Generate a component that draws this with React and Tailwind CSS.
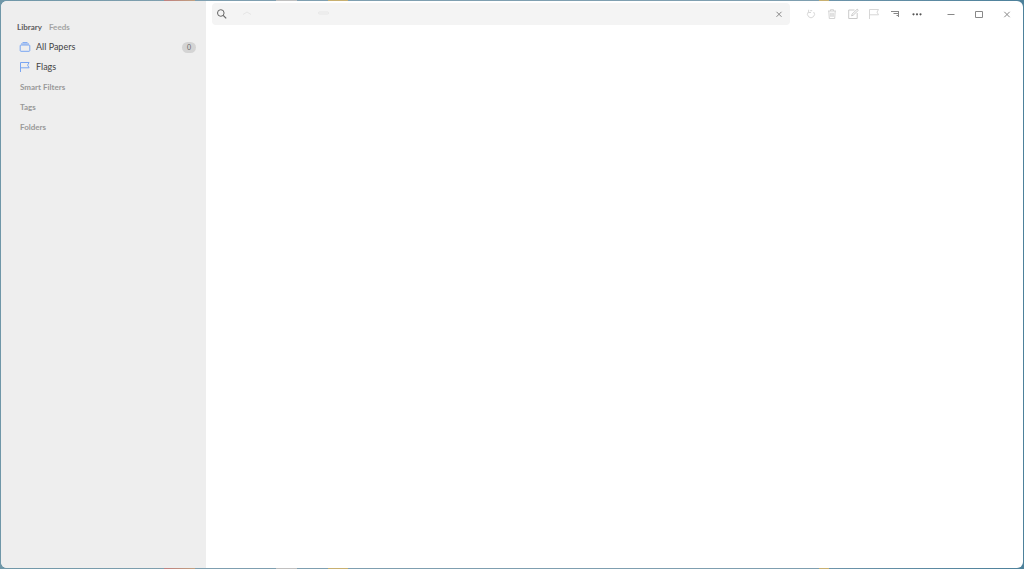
import React, { useState } from 'react';

const CollectionIcon = () => (
  <svg className="h-3 w-3 shrink-0 text-[#78a5f2]" viewBox="0 0 12 12" fill="none" stroke="currentColor">
    <rect x="1.2" y="4" width="9.6" height="6.3" rx="0.8" />
    <path d="M2 2.9h8M3.5 1.5h5" strokeWidth="0.9" />
  </svg>
);

const SideFlagIcon = () => (
  <svg className="h-3 w-3 shrink-0 text-[#78a5f2]" viewBox="0 0 12 12" fill="none" stroke="currentColor">
    <path d="M1.5 11V1.5h8.6L8.6 4.1l1.5 2.7H1.5" />
  </svg>
);

const tools = [
  {
    label: 'Refresh',
    icon: <path d="M3.3 4A3.5 3.5 0 1 0 8.7 4M3.6 1.8v2.7H6M5.2 2.7h2" />,
    color: 'text-[#d3d3d3]',
  },
  {
    label: 'Delete',
    icon: <path d="M2 3h8M4.5 3V1.7h3V3M2.8 3l.5 7.5h5.4L9.2 3M4.8 4.8v4M6 4.8v4M7.2 4.8v4" />,
    color: 'text-[#cfcfcf]',
  },
  {
    label: 'Edit',
    icon: <path d="M7.5 2H1.7v8.5h8.5V5M4.6 7.8l.4-1.6 5.2-5 1.1 1.1-5.2 5z" />,
    color: 'text-[#c4c4c4]',
  },
  {
    label: 'Flag',
    icon: <path d="M1.5 11V1.5h9L9 4.1l1.5 2.7h-9" />,
    color: 'text-[#d3d3d3]',
  },
];

const windowButtons = [
  { label: 'Minimize', icon: <path d="M2.5 6.5h7" /> },
  { label: 'Maximize', icon: <path d="M2.5 3.5h7v6h-7z" /> },
  { label: 'Close', icon: <path d="M3.3 3.8l5.4 5.4M8.7 3.8L3.3 9.2" /> },
];

const sections = ['Smart Filters', 'Tags', 'Folders'];

const App = () => {
  const [tab, setTab] = useState('library');
  const [query, setQuery] = useState('');

  return (
    <div className="flex min-h-screen bg-[linear-gradient(90deg,#6f97a8_0%,#7f9fae_16%,#c08080_16%,#c0a080_19%,#7f9fb0_19%,#7f9fb0_27%,#c0c0c0_27%,#c0c0c0_29%,#7f9fb0_29%,#7f9fb0_32%,#c8b070_32%,#c8b070_34%,#7f9fb0_34%,#7f9fb0_80%,#c8b070_80%,#c8b070_81%,#6d94aa_81%,#4d819b_100%)] p-px font-['Lato',sans-serif]">
      <div className="flex flex-1 overflow-hidden rounded-md bg-white">
        {/* Sidebar */}
        <aside className="w-[205px] shrink-0 bg-[#eeeeee] pt-4">
          <div className="flex h-5 items-center gap-[7px] pl-4 text-[8px] font-bold">
            <button onClick={() => setTab('library')} className={tab === 'library' ? 'text-[#5c5c5c]' : 'text-[#a3a3a3]'}>
              Library
            </button>
            <button onClick={() => setTab('feeds')} className={tab === 'feeds' ? 'text-[#5c5c5c]' : 'text-[#a3a3a3]'}>
              Feeds
            </button>
          </div>
          <nav className="text-[9px] text-[#444444]">
            <a href="#papers" className="flex h-5 items-center pl-[18px] pr-2.5">
              <CollectionIcon />
              <span className="ml-[5px] flex-1">All Papers</span>
              <span className="flex h-[11px] w-3.5 items-center justify-center rounded-full bg-[#d4d4d4] text-[7px] text-[#666666]">0</span>
            </a>
            <a href="#flags" className="flex h-5 items-center pl-[18px] pr-2.5">
              <SideFlagIcon />
              <span className="ml-[5px]">Flags</span>
            </a>
          </nav>
          {sections.map((name) => (
            <h2 key={name} className="flex h-5 items-center pl-[19px] text-[8px] font-bold text-[#999999]">
              {name}
            </h2>
          ))}
        </aside>

        {/* Main */}
        <main className="min-w-0 flex-1">
          <header className="flex items-center pl-1.5 pr-0.5 pt-0.5">
            <div className="flex h-[22px] flex-1 items-center rounded bg-[#f4f4f4] px-1">
              <svg className="h-3 w-3 shrink-0 text-[#666666]" viewBox="0 0 12 12" fill="none" stroke="currentColor">
                <circle cx="4.8" cy="5" r="3.3" />
                <path d="M7.2 7.4l3 3" strokeWidth="1.2" />
              </svg>
              <svg className="ml-3.5 h-2 w-24 shrink-0 text-[#e6e6e6]" viewBox="0 0 96 8" fill="none" stroke="currentColor">
                <path d="M1 4.5l4-2.5 4 2.5" />
                <rect x="76.5" y="2" width="10" height="2" rx="1" />
              </svg>
              <input
                type="text"
                aria-label="Search"
                value={query}
                onChange={(e) => setQuery(e.target.value)}
                className="min-w-0 flex-1 bg-transparent text-[9px] outline-none"
              />
              <button aria-label="Clear search" onClick={() => setQuery('')} className="flex w-3.5 justify-center text-[#888888]">
                <svg className="h-3 w-3" viewBox="0 0 12 12" fill="none" stroke="currentColor">
                  <path d="M3.5 3.8l5 5M8.5 3.8l-5 5" />
                </svg>
              </button>
            </div>

            <div className="ml-2.5 flex items-center">
              {tools.map((tool) => (
                <button key={tool.label} aria-label={tool.label} className={`flex w-[21px] justify-center ${tool.color}`}>
                  <svg className="h-3 w-3" viewBox="0 0 12 12" fill="none" stroke="currentColor" strokeWidth="0.9">
                    {tool.icon}
                  </svg>
                </button>
              ))}
              <button aria-label="Sort" className="flex w-[21px] justify-center text-[#888888]">
                <svg className="h-3 w-3" viewBox="0 0 12 12" fill="none" stroke="currentColor">
                  <path d="M2 3.5h8M4.5 5.5H10M7.5 7.5H10" />
                  <path d="M9.5 3v6" />
                </svg>
              </button>
              <button aria-label="More" className="flex w-6 justify-center text-[#555555]">
                <svg className="h-3 w-3" viewBox="0 0 12 12" fill="currentColor">
                  <circle cx="2.5" cy="6.3" r="1.1" />
                  <circle cx="6" cy="6.3" r="1.1" />
                  <circle cx="9.5" cy="6.3" r="1.1" />
                </svg>
              </button>
            </div>

            <div className="ml-2 flex items-center text-[#888888]">
              {windowButtons.map((button) => (
                <button key={button.label} aria-label={button.label} className="flex w-7 justify-center">
                  <svg className="h-3 w-3" viewBox="0 0 12 12" fill="none" stroke="currentColor">
                    {button.icon}
                  </svg>
                </button>
              ))}
            </div>
          </header>
        </main>
      </div>
    </div>
  );
};

export default App;
